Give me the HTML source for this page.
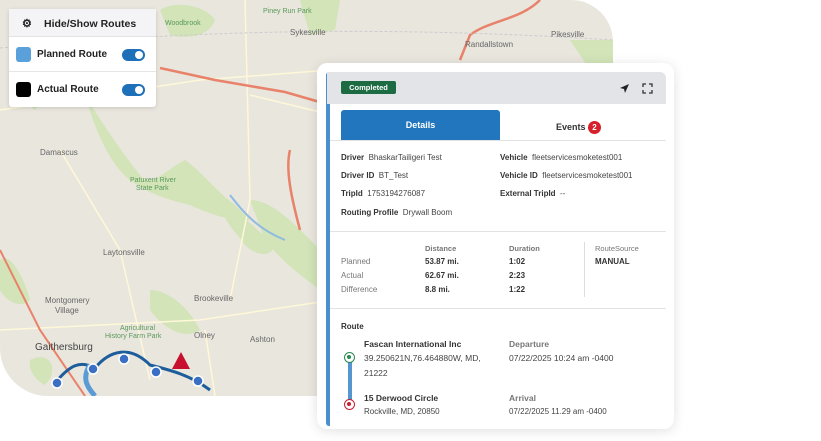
<!DOCTYPE html>
<html><head><meta charset="utf-8"><style>
*{box-sizing:border-box;margin:0;padding:0}
body{width:821px;height:441px;background:#fff;position:relative;overflow:hidden;font-family:"Liberation Sans",sans-serif;color:#333}
.map{position:absolute;left:0;top:0;width:613px;height:396px;background:#e9e6de;border-top-right-radius:42px;border-bottom-left-radius:48px;overflow:hidden}
.legend{position:absolute;left:9px;top:9px;width:147px;height:98px;background:#fff;border-radius:3px;box-shadow:0 1px 4px rgba(0,0,0,.15);font-size:10px;font-weight:bold;color:#222}
.legend .h{height:28px;background:#f4f4f6;border-bottom:1px solid #e3e3e3;padding:9px 0 0 35px;font-size:10.5px}
.legend .r{height:35px;border-bottom:1px solid #e6e6e6;position:relative;padding:12px 0 0 28px}
.sw{position:absolute;left:7px;top:10px;width:15px;height:15px;border-radius:3px}
.tg{position:absolute;left:113px;top:12px;width:23px;height:12px;border-radius:6px;background:#1e70b8}
.tg:after{content:"";position:absolute;right:2px;top:2px;width:8px;height:8px;border-radius:50%;background:#fff}
.card{position:absolute;left:317px;top:63px;width:357px;height:366px;background:#fff;border-radius:10px;box-shadow:0 2px 12px rgba(0,0,0,.12)}
.bar{position:absolute;left:9px;top:9px;width:4px;height:354px;background:#4a90cf;border-radius:3px 0 0 3px}
.hd{position:absolute;left:10px;top:9px;width:339px;height:32px;background:#e3e4e8;border-radius:0 6px 0 0}
.badge{position:absolute;left:24px;top:18px;width:55px;height:13px;background:#1c6b42;color:#fff;font-size:7.5px;font-weight:bold;border-radius:2px;text-align:center;line-height:13px}
.t{position:absolute;font-size:8px;white-space:nowrap;color:#444}
.b{font-weight:bold;color:#333}
.g{color:#777}
</style></head><body>
<div class="map">
<svg width="613" height="396" viewBox="0 0 613 396">
<g fill="#d2e4b8">
<path d="M85 95 C100 120 120 150 140 175 C150 190 165 170 185 160 C200 170 215 190 235 205 L250 220 C230 222 205 212 190 205 C170 200 150 195 130 180 C110 165 95 130 85 95Z"/>
<path d="M160 10 C175 0 205 5 215 20 C210 35 190 40 170 35Z"/>
<path d="M225 205 C240 210 255 230 270 240 C280 255 260 260 245 245 C235 230 220 220 225 205Z"/>
<path d="M250 200 C275 200 300 230 330 260 L320 290 C300 275 280 260 265 240Z"/>
<path d="M0 260 C10 250 25 280 30 300 C20 310 5 300 0 290Z"/>
<path d="M150 290 C170 290 190 310 200 330 C185 340 165 330 150 310Z"/>
<path d="M300 0 L340 0 L335 30 L310 35Z"/>
<path d="M570 40 L613 40 L613 80 L590 70Z"/>
<path d="M20 60 C40 70 50 95 35 110 C20 100 10 80 20 60Z"/>
<path d="M110 60 C125 70 135 90 125 100 C112 95 105 75 110 60Z"/>
<path d="M30 360 C50 350 60 370 45 385 C35 380 28 370 30 360Z"/>
</g>
<g fill="none" stroke="#fff8d8" stroke-width="1.5">
<path d="M0 110 L200 80 L330 70"/><path d="M250 95 L600 180"/><path d="M245 0 L250 200 L230 300"/><path d="M60 150 L120 250 L150 380"/><path d="M0 330 L200 320 L400 290"/><path d="M205 330 L215 396"/>
</g>
<path d="M160 68 L215 80 L285 92 L330 105" stroke="#e8826a" stroke-width="2.5" fill="none"/>
<path d="M290 150 C285 170 292 200 300 230" stroke="#e8826a" stroke-width="2.5" fill="none"/>
<path d="M0 250 L40 330 L85 396" stroke="#e8826a" stroke-width="2" fill="none"/>
<path d="M540 0 C520 20 490 20 470 35 L460 60" stroke="#e8826a" stroke-width="2.5" fill="none"/>
<path d="M0 48 C100 40 300 20 613 40" stroke="#ccc" stroke-width="1" stroke-dasharray="3 2" fill="none"/>
<path d="M230 195 C245 215 260 230 285 240" stroke="#8fbbe0" stroke-width="2" fill="none"/>
<path d="M55 383 C70 365 80 360 95 368 C110 350 130 345 150 365 C170 370 190 375 210 390" stroke="#1d5d9b" stroke-width="3" fill="none"/>
<path d="M90 365 C80 380 90 390 95 396" stroke="#5b9bd5" stroke-width="5" fill="none"/>
<g fill="#3a6fc4" stroke="#fff" stroke-width="1.5"><circle cx="57" cy="383" r="5"/><circle cx="93" cy="369" r="5"/><circle cx="124" cy="359" r="5"/><circle cx="156" cy="372" r="5"/><circle cx="198" cy="381" r="5"/></g>
<path d="M181 352 L190 369 L172 369Z" fill="#c8102e"/>
<g font-family="Liberation Sans" font-size="8" fill="#666"><text x="40" y="155">Damascus</text><text x="103" y="255">Laytonsville</text><text x="45" y="303">Montgomery</text><text x="55" y="313">Village</text><text x="194" y="301">Brookeville</text><text x="194" y="338">Olney</text><text x="250" y="342">Ashton</text><text x="35" y="350" font-size="10" fill="#444">Gaithersburg</text><text x="290" y="35">Sykesville</text><text x="465" y="47">Randallstown</text><text x="551" y="37">Pikesville</text></g>
<g font-family="Liberation Sans" font-size="7" fill="#5a9a5a"><text x="165" y="25">Woodbrook</text><text x="130" y="182">Patuxent River</text><text x="136" y="190">State Park</text><text x="120" y="330">Agricultural</text><text x="105" y="338">History Farm Park</text><text x="263" y="13">Piney Run Park</text></g>
</svg>
</div>
<div class="legend">
<div class="h"><span style="position:absolute;left:13px;top:8px;font-size:11px">⚙</span>Hide/Show Routes</div>
<div class="r"><div class="sw" style="background:#5aa1dc"></div>Planned Route<div class="tg"></div></div>
<div class="r" style="border:none"><div class="sw" style="background:#000"></div>Actual Route<div class="tg"></div></div>
</div>
<div class="card">
<div class="bar"></div>
<div class="hd"></div>
<div class="badge">Completed</div>
<svg style="position:absolute;left:302px;top:20px" width="11" height="11" viewBox="0 0 11 11"><path d="M10 1 L1 5 L5 6 L6 10Z" fill="#222"/></svg>
<svg style="position:absolute;left:325px;top:20px" width="11" height="11" viewBox="0 0 11 11" fill="none" stroke="#333" stroke-width="1.3"><path d="M1 4V1H4M7 1H10V4M10 7V10H7M4 10H1V7"/></svg>
<div style="position:absolute;left:24px;top:47px;width:159px;height:30px;background:#2276bd;border-radius:3px 3px 0 0;color:#fff;font-size:9px;font-weight:bold;text-align:center;line-height:30px">Details</div>
<div class="t b" style="left:239px;top:58px;font-size:9px">Events <span style="display:inline-block;width:13px;height:13px;border-radius:50%;background:#d6202a;color:#fff;text-align:center;line-height:13px;font-size:8px">2</span></div>
<div style="position:absolute;left:13px;top:77px;width:336px;height:1px;background:#e2e2e2"></div>
<div class="t" style="left:24px;top:90px"><span class="b">Driver</span>&nbsp; BhaskarTailigeri Test</div>
<div class="t" style="left:183px;top:90px"><span class="b">Vehicle</span>&nbsp; fleetservicesmoketest001</div>
<div class="t" style="left:24px;top:108px"><span class="b">Driver ID</span>&nbsp; BT_Test</div>
<div class="t" style="left:183px;top:108px"><span class="b">Vehicle ID</span>&nbsp; fleetservicesmoketest001</div>
<div class="t" style="left:24px;top:126px"><span class="b">TripId</span>&nbsp; 1753194276087</div>
<div class="t" style="left:183px;top:126px"><span class="b">External TripId</span>&nbsp; --</div>
<div class="t" style="left:24px;top:145px"><span class="b">Routing Profile</span>&nbsp; Drywall Boom</div>
<div style="position:absolute;left:13px;top:168px;width:336px;height:1px;background:#e2e2e2"></div>
<div class="t b g" style="left:108px;top:181px;font-size:7.5px">Distance</div>
<div class="t b g" style="left:192px;top:181px;font-size:7.5px">Duration</div>
<div class="t g" style="left:278px;top:181px;font-size:7.5px">RouteSource</div>
<div class="t b" style="left:278px;top:194px">MANUAL</div>
<div style="position:absolute;left:267px;top:179px;width:1px;height:55px;background:#ddd"></div>
<div class="t g" style="left:24px;top:194px">Planned</div><div class="t b" style="left:108px;top:194px">53.87 mi.</div><div class="t b" style="left:192px;top:194px">1:02</div>
<div class="t g" style="left:24px;top:208px">Actual</div><div class="t b" style="left:108px;top:208px">62.67 mi.</div><div class="t b" style="left:192px;top:208px">2:23</div>
<div class="t g" style="left:24px;top:222px">Difference</div><div class="t b" style="left:108px;top:222px">8.8 mi.</div><div class="t b" style="left:192px;top:222px">1:22</div>
<div style="position:absolute;left:13px;top:245px;width:336px;height:1px;background:#e2e2e2"></div>
<div class="t b" style="left:24px;top:259px">Route</div>
<div style="position:absolute;left:31px;top:295px;width:4px;height:48px;background:#5596cf"></div>
<div style="position:absolute;left:27px;top:289px;width:11px;height:11px;border-radius:50%;border:1.5px solid #2a8a50;background:#fff"><div style="margin:2px;width:4px;height:4px;border-radius:50%;background:#2a8a50"></div></div>
<div style="position:absolute;left:27px;top:336px;width:11px;height:11px;border-radius:50%;border:1.5px solid #c62030;background:#fff"><div style="margin:2px;width:4px;height:4px;border-radius:50%;background:#c62030"></div></div>
<div class="t b" style="left:47px;top:276px;font-size:8.5px">Fascan International Inc</div>
<div class="t" style="left:47px;top:290px;font-size:8.5px">39.250621N,76.464880W, MD,</div>
<div class="t" style="left:47px;top:305px;font-size:8.5px">21222</div>
<div class="t b g" style="left:192px;top:276px;font-size:8.5px">Departure</div>
<div class="t" style="left:192px;top:290px;font-size:8.5px">07/22/2025 10:24 am -0400</div>
<div class="t b" style="left:47px;top:330px;font-size:8.5px">15 Derwood Circle</div>
<div class="t" style="left:47px;top:344px">Rockville, MD, 20850</div>
<div class="t b g" style="left:192px;top:330px;font-size:8.5px">Arrival</div>
<div class="t" style="left:192px;top:344px">07/22/2025 11.29 am -0400</div>
</div>
</body></html>
